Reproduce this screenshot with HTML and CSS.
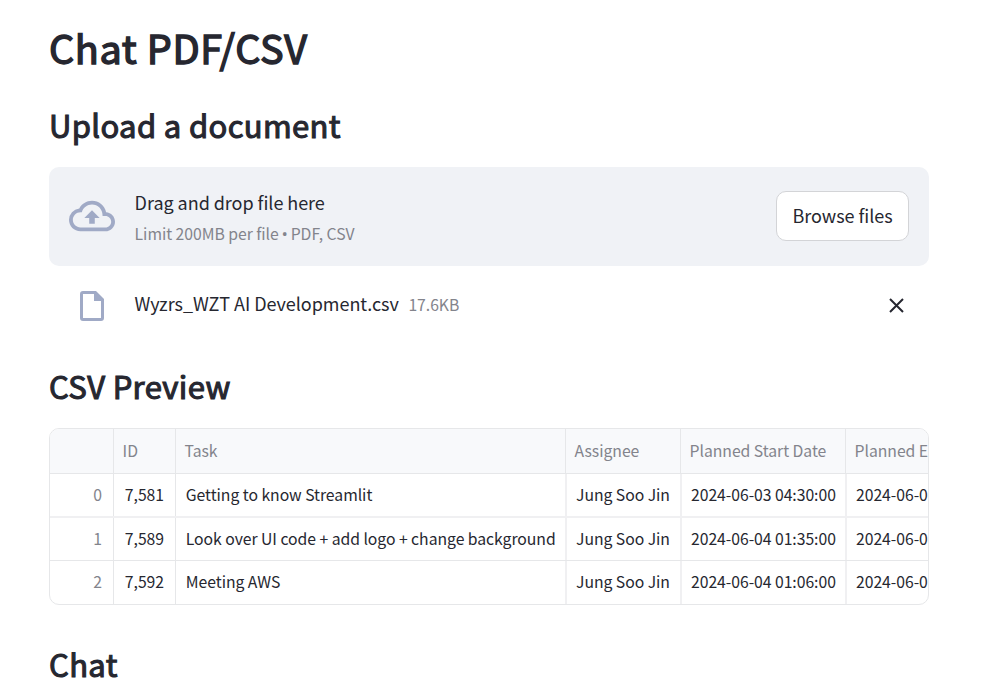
FILE: index.html
```html
<!DOCTYPE html>
<html lang="en">
<head>
<meta charset="utf-8">
<title>Chat PDF/CSV</title>
<link rel="stylesheet" href="styles.css">
</head>
<body>
<main class="page">
  <h1 class="title">Chat PDF/CSV</h1>
  <h2 class="heading upload-heading">Upload a document</h2>
  <section class="dropzone">
    <svg class="cloud" viewBox="0 0 24 24"><path d="M19.35 10.04A7.49 7.49 0 0 0 12 4C9.11 4 6.6 5.64 5.35 8.04A5.994 5.994 0 0 0 0 14c0 3.31 2.69 6 6 6h13c2.76 0 5-2.24 5-5 0-2.64-2.05-4.78-4.65-4.96zM19 18H6c-2.21 0-4-1.79-4-4s1.79-4 4-4h.71C7.37 7.69 9.48 6 12 6c3.04 0 5.5 2.46 5.5 5.5v.5H19c1.66 0 3 1.34 3 3s-1.34 3-3 3zM8 13h2.55v3h2.9v-3H16l-4-4z"/></svg>
    <div class="instructions">
      <span class="drop-label">Drag and drop file here</span>
      <span class="limit">Limit 200MB per file <span class="bullet">•</span> PDF, CSV</span>
    </div>
    <button class="browse" type="button">Browse files</button>
  </section>
  <div class="file">
    <svg class="file-icon" viewBox="0 0 24 30"><path fill-rule="evenodd" d="M3 0H16L24 8V27a3 3 0 0 1-3 3H3a3 3 0 0 1-3-3V3a3 3 0 0 1 3-3zM3 3V27H21V10H14V3z"/></svg>
    <span class="file-name">Wyzrs_WZT AI Development.csv</span>
    <span class="file-size">17.6KB</span>
    <svg class="close" viewBox="0 0 16 16"><path d="M1 1L14 14M14 1L1 14"/></svg>
  </div>
  <h2 class="heading preview-heading">CSV Preview</h2>
  <div class="table">
    <div class="row head"><div></div><div>ID</div><div>Task</div><div>Assignee</div><div>Planned Start Date</div><div>Planned E</div></div>
    <div class="row soft"><div class="index">0</div><div class="num">7,581</div><div class="task">Getting to know Streamlit</div><div>Jung Soo Jin</div><div>2024-06-03 04:30:00</div><div>2024-06-0</div></div>
    <div class="row"><div class="index">1</div><div class="num">7,589</div><div class="task">Look over UI code + add logo + change background</div><div>Jung Soo Jin</div><div>2024-06-04 01:35:00</div><div>2024-06-0</div></div>
    <div class="row last"><div class="index">2</div><div class="num">7,592</div><div class="task">Meeting AWS</div><div>Jung Soo Jin</div><div>2024-06-04 01:06:00</div><div>2024-06-0</div></div>
  </div>
  <h2 class="heading chat-heading">Chat</h2>
</main>
</body>
</html>
```
FILE: styles.css
```css
* { box-sizing: border-box; }
body {
  margin: 0;
  height: 690px;
  overflow: hidden;
  background: #fff;
  color: #262730;
  font-family: "Noto Sans CJK SC", "Open Sans", sans-serif;
  font-size: 18px;
  letter-spacing: -0.04px;
}
.page { width: 880px; margin-left: 49px; padding-top: 17px; }
.title, .heading { margin: 0; font-weight: 400; white-space: nowrap; }
.title { font-size: 39.6px; line-height: 59px; height: 60px; letter-spacing: 0.6px; -webkit-text-stroke: 1.4px #262730; }
.heading { font-size: 31px; line-height: 44px; height: 44px; letter-spacing: 0.36px; -webkit-text-stroke: 1.1px #262730; }
.upload-heading { margin-top: 26px; }
.dropzone {
  display: flex;
  align-items: center;
  height: 99px;
  margin-top: 20px;
  padding: 0 20px 1px;
  border-radius: 10px;
  background: #f0f2f6;
}
.cloud { width: 46px; height: 46px; margin-right: 19.6px; fill: #a0aac6; }
.instructions { display: flex; flex-direction: column; flex: 1; padding-top: 5px; white-space: nowrap; }
.drop-label { line-height: 31px; }
.limit, .file-size { font-size: 15.75px; color: #83848c; }
.limit { line-height: 32px; }
.bullet { font-family: "Open Sans", sans-serif; font-size: 17px; line-height: 1; margin: 0 -0.7px; }
.browse {
  width: 133px;
  height: 50px;
  padding: 0 0 3px;
  border: 1px solid #d3d4d7;
  border-radius: 10px;
  background: #fff;
  color: inherit;
  font: inherit;
  letter-spacing: inherit;
}
.file { display: flex; align-items: center; height: 40px; margin-top: 20px; padding: 0 24px 0 31px; }
.file-icon { width: 24px; height: 30px; margin-right: 30.5px; fill: #a0aac6; }
.file-name { padding-bottom: 6px; }
.file-size { padding-bottom: 4px; }
.file-name { margin-right: 9.6px; }
.close { width: 16px; height: 16px; margin-left: auto; fill: none; stroke: #262730; stroke-width: 2; }
.preview-heading { margin-top: 38px; }
.table {
  height: 177px;
  margin-top: 20px;
  overflow: hidden;
  border: 1px solid #e6e7e9;
  border-radius: 10px;
  font-size: 15.75px;
}
.row { display: grid; grid-template-columns: 64px 62px 391px 115px 165px 83px; height: 43px; border-bottom: 1px solid #e6e7e9; }
.row > div { padding: 0 9px; border-right: 1px solid #e6e7e9; line-height: 42px; white-space: nowrap; }
.row > div:nth-child(n+3) { border-right: 2px solid #f0f0f2; }
.row > div:last-child { padding-right: 0; border-right: 0; }
.row.head { grid-template-columns: 64px 62px 390px 115px 165px 84px; height: 45px; background: #f8f9fb; color: #83848c; }
.row.head > div { padding-left: 8.6px; line-height: 43px; }
.row.head > div:nth-child(n+3):not(:last-child) { border-right: 1px solid #e6e7e9; }
.row.soft { height: 44px; border-bottom: 2px solid #f0f0f2; }
.row.last { height: 43px; border-bottom: 0; }
.row > .task { padding-left: 9.8px; }
.row > .index { padding-right: 11px; color: #83848c; text-align: right; }
.row > .num { padding-right: 11px; text-align: right; }
.chat-heading { margin-top: 37px; }
```
